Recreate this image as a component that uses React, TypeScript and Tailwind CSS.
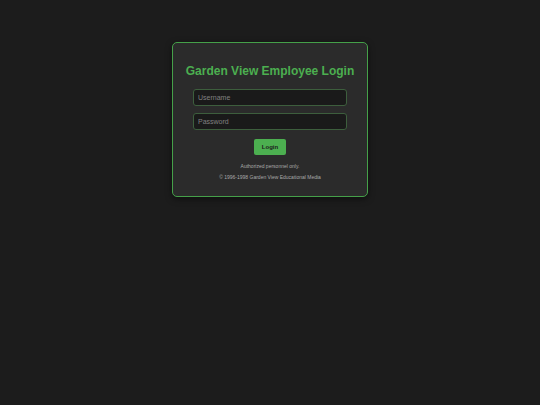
export default function App() {
  return (
    <div
      className="min-h-[405px] w-full bg-[#1c1c1c] pt-[42px]"
      style={{ fontFamily: '"Liberation Sans", Arial, sans-serif' }}
    >
      <div className="mx-auto flex w-[196px] flex-col items-center rounded-[5px] border border-[#45a049] bg-[#2b2b2b] px-[20px] pb-[16px] pt-[20px] shadow-[0_2px_6px_rgba(0,0,0,0.5)]">
        <h1 className="whitespace-nowrap text-[12px] font-bold leading-[16px] text-[#4caf50]">
          Garden View Employee Login
        </h1>
        <form className="mt-[10px] flex w-full flex-col items-center">
          <input
            type="text"
            placeholder="Username"
            className="h-[17px] w-full rounded-[3px] border border-[#3d5e3d] bg-[#1a1a1a] px-[4px] text-[7px] text-[#ccc] outline-none placeholder:text-[#808080]"
          />
          <input
            type="password"
            placeholder="Password"
            className="mt-[7px] h-[17px] w-full rounded-[3px] border border-[#3d5e3d] bg-[#1a1a1a] px-[4px] text-[7px] text-[#ccc] outline-none placeholder:text-[#808080]"
          />
          <button
            type="button"
            className="mt-[9px] h-[16px] w-[32px] rounded-[2px] bg-[#4caf50] text-[6px] font-bold text-[#1c1c1c]"
          >
            Login
          </button>
        </form>
        <p className="mt-[8px] text-[5px] leading-[6px] text-[#aaa]">Authorized personnel only.</p>
        <p className="mt-[5px] text-[5px] leading-[6px] text-[#aaa]">
          © 1996-1998 Garden View Educational Media
        </p>
      </div>
    </div>
  );
}
